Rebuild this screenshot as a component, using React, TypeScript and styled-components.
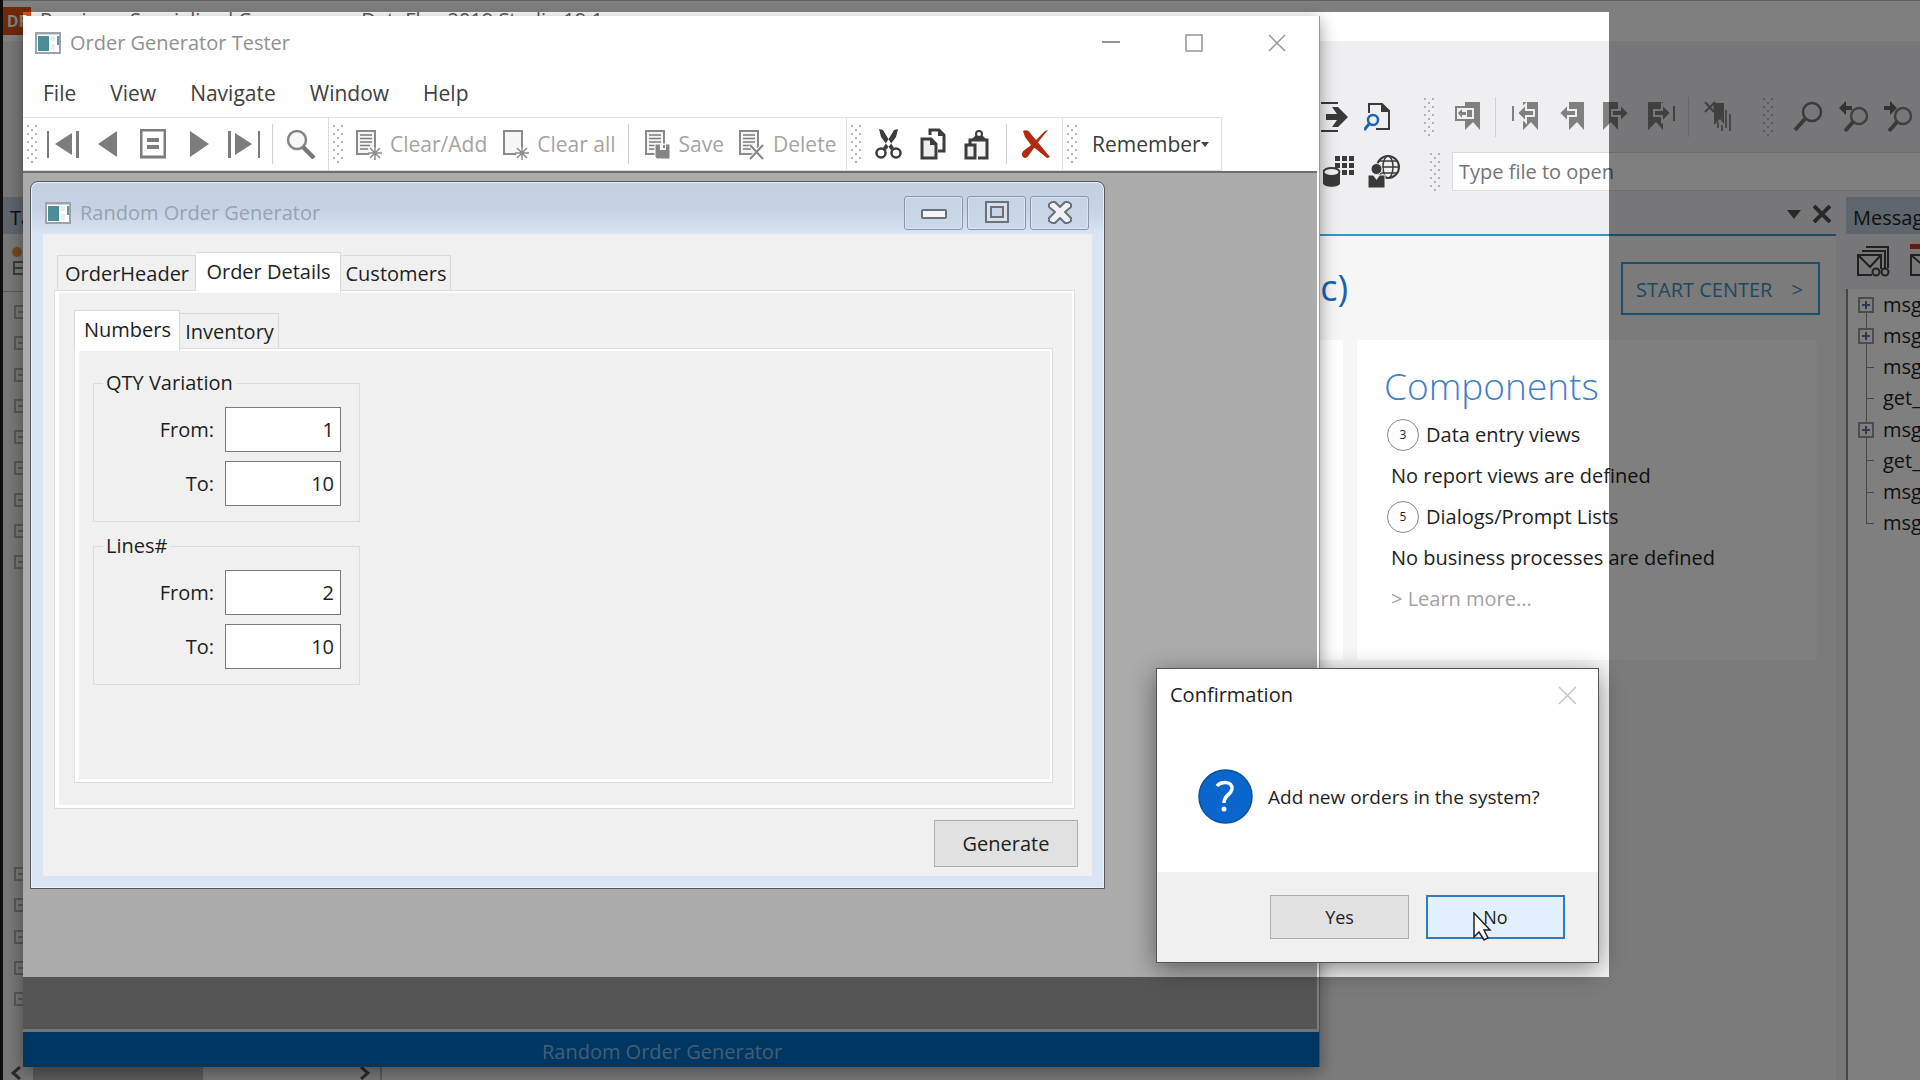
import React from "react";
import styled, { createGlobalStyle, css } from "styled-components";

const Global = createGlobalStyle`
  *, *::before, *::after { box-sizing: border-box; }
  html, body, #root { height: 100%; margin: 0; }
  body { overflow: hidden; }
  button, input { font: inherit; color: inherit; }
`;

const Desktop = styled.div`
  position: relative;
  height: 100vh;
  overflow: hidden;
  background: #efeff2;
  color: #1e1e1e;
  font-family: "Open Sans", "Noto Sans", sans-serif;
  font-size: 20px;
  line-height: 24px;
`;

const iconButton = css`
  display: flex;
  align-items: center;
  justify-content: center;
  padding: 0;
  border: 0;
  background: none;
`;

/* ---------- Studio (background application) ---------- */

const Studio = styled.div`
  display: flex;
  flex-direction: column;
  height: 100%;
  border-left: 3px solid #1c1c1c;
`;

const StudioTitle = styled.header`
  display: flex;
  gap: 9px;
  height: 41px;
  padding-top: 6px;
  background: #ffffff;
  border-top: 1px solid #c4c4c4;
  line-height: 26px;
  color: #5a5a5a;
`;

const StudioLogo = styled.span`
  width: 28px;
  height: 28px;
  background: #e2520f;
  color: #ffffff;
  font-size: 16px;
  font-weight: 700;
  line-height: 28px;
  text-align: center;
`;

const StudioTools = styled.div`
  display: flex;
  flex-direction: column;
  gap: 12px;
  height: 156px;
  padding-top: 54px;
`;

const ToolRow = styled.div`
  display: flex;
  align-items: center;
  justify-content: flex-end;
  height: 43px;
`;

const StudioTool = styled.button<{ $w: number; $gap?: number }>`
  ${iconButton}
  width: ${(p) => p.$w}px;
  margin-right: ${(p) => p.$gap ?? 0}px;
  color: #808080;
`;

const Divider = styled.span<{ $gap?: number; $h?: number }>`
  width: 1px;
  height: ${(p) => p.$h ?? 40}px;
  margin-right: ${(p) => p.$gap ?? 0}px;
  background: #d0d0d0;
`;

const Grip = styled.span<{ $gap?: number }>`
  flex: none;
  width: 10px;
  height: 38px;
  margin-right: ${(p) => p.$gap ?? 0}px;
  background-image: radial-gradient(circle at 1px 1px, #b4b4b4 1px, transparent 1px),
    radial-gradient(circle at 5px 5px, #b4b4b4 1px, transparent 1px);
  background-size: 8px 8px;
`;

const FileBox = styled.input`
  width: 468px;
  height: 39px;
  padding: 0 6px;
  border: 1px solid #dcdcdf;
  border-right: 0;
  background: #ffffff;
  &::placeholder { color: #747474; opacity: 1; }
`;

const Dock = styled.div`
  display: flex;
  flex: 1;
  min-height: 0;
`;

const LeftDock = styled.section`
  display: flex;
  flex-direction: column;
  width: 379px;
  border-right: 2px solid #b8b8b8;
`;

const DockHeader = styled.h2`
  margin: 0;
  height: 37px;
  padding: 0 7px;
  background: #bccadb;
  font-size: 20px;
  font-weight: 400;
  line-height: 42px;
  overflow: hidden;
`;

const DockTools = styled.div`
  height: 58px;
  padding: 10px 8px;
  border-bottom: 1px solid #b8b8b8;
`;

const NodeColumn = styled.div<{ $top: number; $h: number }>`
  display: flex;
  flex-direction: column;
  justify-content: space-between;
  height: ${(p) => p.$h}px;
  margin: ${(p) => p.$top}px 0 0 11px;
`;

const NodeBox = styled.span`
  width: 14px;
  height: 14px;
  border: 2px solid #b0b0b0;
  background: linear-gradient(#b0b0b0, #b0b0b0) center / 6px 2px no-repeat;
`;

const ScrollBar = styled.div`
  display: flex;
  align-items: center;
  justify-content: space-between;
  height: 14px;
  margin-top: auto;
  padding: 0 10px 0 8px;
  background: linear-gradient(#b8b8b8, #b8b8b8) 30px 0 / 170px 14px no-repeat;
  color: #555555;
`;

const Center = styled.main`
  display: flex;
  flex-direction: column;
  flex: 1;
  min-width: 0;
  margin-right: 10px;
`;

const DocTabs = styled.div`
  display: flex;
  align-items: center;
  justify-content: flex-end;
  gap: 12px;
  height: 39px;
  padding: 0 5px 3px 0;
  border-bottom: 2px solid #3a93c4;
`;

const DocButton = styled.button`
  ${iconButton}
  color: #505050;
`;

const DialogClose = styled(DocButton)`
  color: #c4c4c4;
`;

const StartPage = styled.div`
  flex: 1;
  padding: 26px 16px 0 0;
  background: #f6f6f6;
`;

const StartHead = styled.div`
  display: flex;
  justify-content: space-between;
  height: 53px;
  padding-left: 500px;
`;

const ProjectName = styled.h1`
  flex: 1;
  max-width: 466px;
  margin: 0;
  color: #1a62b5;
  font-size: 36px;
  font-weight: 400;
  line-height: 52px;
  text-align: right;
`;

const StartCenter = styled.a`
  display: flex;
  align-items: center;
  justify-content: space-between;
  width: 199px;
  padding: 2px 15px 0 13px;
  border: 2px solid #3f9cd0;
  color: #3f8fc4;
  text-decoration: none;
`;

const Cards = styled.div`
  display: grid;
  grid-template-columns: 1fr 460px;
  gap: 14px;
  height: 320px;
  margin: 25px 3px 0 0;
`;

const Card = styled.section`
  padding: 18px 27px;
  background: #ffffff;
`;

const CardTitle = styled.h2`
  margin: 0;
  color: #3f7fc4;
  font-size: 37px;
  font-weight: 300;
  line-height: 56px;
`;

const CardLine = styled.div<{ $pad?: boolean }>`
  display: flex;
  align-items: center;
  gap: 7px;
  height: 41px;
  padding-left: ${(p) => (p.$pad ? 7 : 3)}px;
  white-space: nowrap;
`;

const Count = styled.span`
  width: 32px;
  height: 32px;
  border: 1px solid #8a8a8a;
  border-radius: 50%;
  font-size: 12px;
  line-height: 30px;
  text-align: center;
`;

const LearnMore = styled.a`
  color: #a2a2a6;
  text-decoration: none;
`;

const Messages = styled.aside`
  display: flex;
  flex-direction: column;
  width: 74px;
  overflow: hidden;
`;

const MessageTools = styled.div`
  display: flex;
  align-items: center;
  gap: 10px;
  height: 55px;
  padding: 0 0 2px 11px;
`;

const MessageTree = styled.ul`
  display: grid;
  flex: 1;
  grid-template-rows: repeat(8, 1fr);
  align-content: start;
  margin: 0;
  padding: 0 0 541px;
  border-left: 2px solid #8c8c8c;
  background: #ffffff;
  list-style: none;
`;

const MessageNode = styled.li<{ $edge?: "first" | "last" }>`
  display: flex;
  align-items: center;
  gap: 9px;
  padding-left: 10px;
  background: linear-gradient(#8c8c8c, #8c8c8c) 18px
    ${(p) => (p.$edge === "first" ? "100%" : "0")} / 1px
    ${(p) => (p.$edge ? "50%" : "100%")} no-repeat;
`;

const Branch = styled.span<{ $open?: boolean }>`
  flex: none;
  width: 16px;
  height: 16px;
  ${(p) =>
    p.$open
      ? css`
          border: 2px solid #9a9a9a;
          background: linear-gradient(#66709c, #66709c) center / 8px 2px no-repeat,
            linear-gradient(#66709c, #66709c) center / 2px 8px no-repeat, #ffffff;
        `
      : css`
          background: linear-gradient(#8c8c8c, #8c8c8c) 100% 50% / 8px 1px no-repeat;
        `}
`;

/* ---------- Order Generator Tester window ---------- */

const TesterWindow = styled.section`
  position: absolute;
  top: 16px;
  right: 600px;
  bottom: 13px;
  left: 23px;
  display: flex;
  flex-direction: column;
  border-right: 1px solid #9a9a9a;
  background: #ffffff;
  box-shadow: 0 4px 16px rgba(0, 0, 0, 0.4);
`;

const TitleBar = styled.header`
  display: flex;
  align-items: center;
  gap: 9px;
  height: 53px;
  padding: 0 33px 0 12px;
  color: #909090;
`;

const Caption = styled.span`
  flex: 1;
`;

const FlatControls = styled.div`
  display: flex;
  gap: 65px;
  color: #959595;
`;

const FlatButton = styled.button`
  ${iconButton}
  width: 18px;
`;

const MenuBar = styled.nav`
  display: flex;
  gap: 34px;
  height: 48px;
  padding: 12px 20px 0;
  font-size: 21px;
`;

const MenuItem = styled.button`
  ${iconButton}
  height: 24px;
  color: #404040;
`;

const ToolBar = styled.div`
  display: flex;
  height: 54px;
  font-size: 21px;
`;

const Band = styled.div<{ $w: number }>`
  display: flex;
  align-items: center;
  width: ${(p) => p.$w}px;
  padding-left: 4px;
  border: 1px solid #dedede;
  border-left: 0;
`;

const Tool = styled.button<{ $gap?: number; $dark?: boolean }>`
  ${iconButton}
  gap: ${(p) => (p.$dark ? 0 : 8)}px;
  margin-right: ${(p) => p.$gap ?? 0}px;
  color: ${(p) => (p.$dark ? "#3c3c3c" : "#a4a4a4")};
  white-space: nowrap;
`;

const Workspace = styled.div`
  flex: 1;
  margin-right: 2px;
  padding: 8px 0 0 7px;
  border-top: 2px solid #6e6e6e;
  background: #ababab;
`;

const StatusBar = styled.footer`
  height: 38px;
  padding: 4px 18px 0 0;
  border-top: 3px solid #e4e8ea;
  background: #006cc4;
  color: #86bbe8;
  line-height: 32px;
  text-align: center;
`;

const ChildWindow = styled.section`
  display: flex;
  flex-direction: column;
  width: 1075px;
  height: 708px;
  padding: 0 12px 12px;
  border: 1px solid #53585f;
  border-radius: 8px 8px 0 0;
  background: linear-gradient(#c3d0e0, #c5d3e4 28px, #d9e4f4 52px);
  box-shadow: inset 0 0 0 1px #eaf1fa;
`;

const ChildTitle = styled.header`
  display: flex;
  align-items: center;
  gap: 9px;
  height: 52px;
  padding: 10px 3px 0 2px;
  color: #98a3b2;
`;

const ChildControls = styled.div`
  display: flex;
  gap: 4px;
  height: 34px;
`;

const ChildButton = styled.button`
  ${iconButton}
  width: 59px;
  border: 1px solid #8797ab;
  border-radius: 3px;
  background: linear-gradient(#c6d3e3, #cbd8e9);
  box-shadow: inset 0 0 0 1px #dbe5f1;
`;

const ChildBody = styled.form`
  display: flex;
  flex: 1;
  flex-direction: column;
  gap: 11px;
  padding: 18px 14px 9px 11px;
  background: #f0f0f0;
`;

const TabArea = styled.div`
  display: flex;
  flex: 1;
  flex-direction: column;
  margin-right: 3px;
`;

const TabStrip = styled.div<{ $indent: number }>`
  display: flex;
  align-items: flex-end;
  height: 38px;
  padding-left: ${(p) => p.$indent}px;
`;

const Tab = styled.button<{ $w: number }>`
  ${iconButton}
  position: relative;
  width: ${(p) => p.$w}px;
  height: 35px;
  padding: 2px 0 0 1px;
  border: 1px solid #d9d9d9;
  border-width: 1px 1px 0 0;
  &:first-child { border-left-width: 1px; }
  &[aria-selected="true"] {
    height: 41px;
    margin-bottom: -3px;
    padding-bottom: 5px;
    background: #ffffff;
  }
`;

const TabPanel = styled.div<{ $pad: string }>`
  display: flex;
  flex: 1;
  flex-direction: column;
  padding: ${(p) => p.$pad};
  border: 1px solid #dcdcdc;
  box-shadow: inset 4px 0 #ffffff, inset -2px 0 #ffffff, inset 0 2px #ffffff, inset 0 -3px #ffffff;
`;

const Group = styled.fieldset`
  display: flex;
  flex-direction: column;
  gap: 9px;
  width: 267px;
  margin: 0 0 12px;
  padding: 12px 18px 15px;
  border: 1px solid #dcdcdc;
`;

const Legend = styled.legend`
  margin-left: -9px;
  padding: 0 3px;
`;

const Field = styled.label`
  display: flex;
  align-items: center;
  justify-content: flex-end;
  gap: 11px;
`;

const NumberBox = styled.input`
  width: 116px;
  height: 45px;
  padding: 0 6px;
  border: 1px solid #7a7a7a;
  background: #ffffff;
  text-align: right;
`;

const PushButton = styled.button<{ $w: number; $h: number; $focus?: boolean }>`
  width: ${(p) => p.$w}px;
  height: ${(p) => p.$h}px;
  padding: 0;
  border: ${(p) => (p.$focus ? "2px solid #2c7cc4" : "1px solid #adadad")};
  background: ${(p) => (p.$focus ? "#e2effc" : "#e1e1e1")};
`;

const GenerateButton = styled(PushButton)`
  align-self: flex-end;
`;

/* ---------- Confirmation dialog ---------- */

const Dialog = styled.section`
  position: absolute;
  top: 668px;
  right: 321px;
  width: 443px;
  border: 1px solid #555555;
  background: #ffffff;
  box-shadow: 0 6px 24px rgba(0, 0, 0, 0.45);
`;

const DialogTitle = styled.header`
  display: flex;
  align-items: center;
  justify-content: space-between;
  height: 52px;
  padding: 0 21px 0 13px;
`;

const DialogMessage = styled.div`
  display: flex;
  align-items: center;
  gap: 15px;
  height: 151px;
  padding-left: 41px;
  font-size: 19px;
`;

const DialogButtons = styled.footer`
  display: flex;
  justify-content: flex-end;
  gap: 17px;
  height: 90px;
  padding: 23px 33px 0;
  background: #f0f0f0;
  font-size: 18px;
`;

const Pointer = styled.svg`
  position: absolute;
  top: 912px;
  right: 427px;
`;

const Spotlight = styled.div`
  position: absolute;
  top: 12px;
  right: 311px;
  bottom: 103px;
  left: 23px;
  box-shadow: 0 0 0 2000px rgba(0, 0, 0, 0.5);
  pointer-events: none;
`;

/* ---------- Icons ---------- */

type SvgProps = { w: number; h: number; children: React.ReactNode };
const Svg = ({ w, h, children }: SvgProps) => (
  <svg width={w} height={h} viewBox={`0 0 ${w} ${h}`} fill="none" aria-hidden="true">
    {children}
  </svg>
);

const AppIcon = () => (
  <Svg w={26} h={22}>
    <rect x="1" y="1" width="24" height="20" fill="#fff" stroke="#9da3a8" strokeWidth="2" />
    <path d="M2 2.500h22" stroke="#cfd6dc" />
    <rect x="3" y="4" width="11" height="15" fill="#4a8f94" />
    <path d="M16 4h4v5h-4zM16 12h4v6h-4z" fill="#e9edf0" />
    <path d="M23 4v9" stroke="#6d93a4" strokeWidth="2" />
  </Svg>
);

const Page = ({ children }: { children?: React.ReactNode }) => (
  <Svg w={27} h={31}>
    <rect x="2" y="2" width="18" height="23" fill="#f6f6f6" stroke="#8a8a8a" strokeWidth="2" />
    {children}
  </Svg>
);
const Lines = () => <path d="M5 6h12M5 9.500h12M5 13h12M5 16.500h10M5 20h8" stroke="#7c7c7c" strokeWidth="1.500" />;
const Star = () => (
  <g>
    <circle cx="20" cy="24" r="6" fill="#fff" />
    <path d="M20 17v14M13 24h14M15 19l10 10M25 19l-10 10" stroke="#8c8c8c" strokeWidth="1.500" />
  </g>
);

const Mark = ({ x = 0 }: { x?: number }) => <path d={`M${x} 1h15v28l-7-8-8 8z`} fill="#808080" />;
const ArrowLeft = () => (
  <path d="M1 12l9-9v6h8v6h-8v6z" fill="#808080" stroke="#efeff2" strokeWidth="2" />
);
const ArrowRight = () => (
  <path d="M26 12l-9-9v6H9v6h8v6z" fill="#808080" stroke="#efeff2" strokeWidth="2" />
);

const Lens = () => (
  <Svg w={30} h={31}>
    <circle cx="19" cy="11" r="9" stroke="#747474" strokeWidth="2.500" />
    <path d="M12 18L2 29" stroke="#747474" strokeWidth="4" />
  </Svg>
);
const LensStep = ({ next }: { next?: boolean }) => (
  <Svg w={30} h={31}>
    <circle cx="20" cy="15" r="8" stroke="#808080" strokeWidth="2.500" />
    <path d="M14 21L6 30" stroke="#747474" strokeWidth="4" />
    <path d={next ? "M14 7L7 0v5H1v4h6v5z" : "M0 7l7-7v5h6v4H7v5z"} fill="#666" />
  </Svg>
);

const CrossIcon = ({ s, w = 1 }: { s: number; w?: number }) => (
  <Svg w={s} h={s}>
    <path d={`M1 1L${s - 1} ${s - 1}M${s - 1} 1L1 ${s - 1}`} stroke="currentColor" strokeWidth={w} />
  </Svg>
);

const Tri = ({ flip }: { flip?: boolean }) => (
  <Svg w={19} h={26}>
    <path d={flip ? "M0 0v26l19-13z" : "M19 0v26L0 13z"} fill="#7c7c7c" />
  </Svg>
);
const EndTri = ({ flip }: { flip?: boolean }) => (
  <Svg w={32} h={27}>
    <g transform={flip ? "translate(32 0) scale(-1 1)" : undefined} fill="#7c7c7c">
      <path d="M0 0h2v27H0zM29 0h3v27h-3zM25 2v22L8 13z" />
    </g>
  </Svg>
);

const Envelope = () => (
  <Svg w={33} h={33}>
    <path d="M1 11h23v20H1zM1 11l12 12 11-12M5 7h23v17M9 3h22v21" stroke="#404040" strokeWidth="2" />
    <path d="M15 25h17v7H15z" fill="#efeff2" />
    <circle cx="19" cy="28" r="3.500" stroke="#404040" strokeWidth="2" />
    <circle cx="28" cy="28" r="3.500" stroke="#404040" strokeWidth="2" />
  </Svg>
);

/* ---------- Screens ---------- */

const messages: { text: string; open?: boolean }[] = [
  { text: "msg_", open: true },
  { text: "msg_", open: true },
  { text: "msg_" },
  { text: "get_" },
  { text: "msg_", open: true },
  { text: "get_" },
  { text: "msg_" },
  { text: "msg_" },
];

const nodes = (n: number) => Array.from({ length: n }, (_, i) => <NodeBox key={i} />);

const StudioApp = () => (
  <Studio>
    <StudioTitle>
      <StudioLogo>DF</StudioLogo>
      <span>Preview - Specialized Consumers - DataFlex 2019 Studio 19.1</span>
    </StudioTitle>
    <StudioTools>
      <ToolRow>
        <StudioTool $w={28} $gap={15} aria-label="Run">
          <Svg w={28} h={32}>
            <path d="M0 2h17M0 30h17" stroke="#3a3a3a" strokeWidth="2" />
            <path d="M5 13h11l-5-7h6l10 10-10 10h-6l5-7H5z" fill="#3a3a3a" />
          </Svg>
        </StudioTool>
        <StudioTool $w={27} $gap={33} aria-label="Find in files">
          <Svg w={27} h={29}>
            <path d="M5 11V2h13l7 7v18H12" stroke="#3a3a3a" strokeWidth="2" />
            <path d="M17 1l9 9h-9z" fill="#3a3a3a" />
            <circle cx="9" cy="18" r="5" stroke="#1f62ae" strokeWidth="2.500" />
            <path d="M5 22l-5 6" stroke="#1f62ae" strokeWidth="3" />
          </Svg>
        </StudioTool>
        <Grip $gap={21} />
        <StudioTool $w={27} $gap={13} aria-label="Toggle bookmark">
          <Svg w={27} h={31}>
            <Mark x={10} />
            <path d="M1 6h19v13H1z" fill="#efeff2" stroke="#808080" strokeWidth="2" />
            <path d="M3 12l4-4v3h4v3H7v3zM12 9h5v7h-5z" fill="#808080" />
          </Svg>
        </StudioTool>
        <Divider $gap={16} />
        <StudioTool $w={27} $gap={19} aria-label="First bookmark">
          <Svg w={27} h={31}>
            <Mark x={11} />
            <path d="M1 5v15" stroke="#808080" strokeWidth="2" />
            <g transform="translate(4 0)"><ArrowLeft /></g>
          </Svg>
        </StudioTool>
        <StudioTool $w={26} $gap={19} aria-label="Previous bookmark">
          <Svg w={26} h={31}><Mark x={11} /><ArrowLeft /></Svg>
        </StudioTool>
        <StudioTool $w={26} $gap={19} aria-label="Next bookmark">
          <Svg w={26} h={31}><Mark /><ArrowRight /></Svg>
        </StudioTool>
        <StudioTool $w={27} $gap={13} aria-label="Last bookmark">
          <Svg w={27} h={31}>
            <Mark />
            <g transform="translate(-3 0)"><ArrowRight /></g>
            <path d="M26 5v15" stroke="#808080" strokeWidth="2" />
          </Svg>
        </StudioTool>
        <Divider $gap={15} />
        <StudioTool $w={29} $gap={30} aria-label="Clear bookmarks">
          <Svg w={29} h={31}>
            <path d="M9 2h11v21l-4-5-6 6V11z" fill="#808080" />
            <path d="M22 9v18M26 13v17M18 24v6M14 21v6" stroke="#909090" strokeWidth="2" />
            <path d="M1 1l9 10M11 1L1 11" stroke="#808080" strokeWidth="2" />
          </Svg>
        </StudioTool>
        <Grip $gap={20} />
        <StudioTool $w={30} $gap={16} aria-label="Find"><Lens /></StudioTool>
        <StudioTool $w={30} $gap={14} aria-label="Find previous"><LensStep /></StudioTool>
        <StudioTool $w={30} $gap={7} aria-label="Find next"><LensStep next /></StudioTool>
      </ToolRow>
      <ToolRow>
        <StudioTool $w={32} $gap={13} aria-label="Database">
          <Svg w={32} h={33}>
            <path d="M12 1h5v5h-5zM19 1h5v5h-5zM26 1h5v5h-5zM12 8h5v5h-5zM19 8h5v5h-5zM26 8h5v5h-5zM19 15h5v5h-5zM26 15h5v5h-5z" fill="#3a3a3a" />
            <path d="M0 17v11c0 5 17 5 17 0V17z" fill="#3a3a3a" />
            <ellipse cx="8.500" cy="17" rx="8" ry="4" fill="#f4f4f6" stroke="#3a3a3a" strokeWidth="2" />
          </Svg>
        </StudioTool>
        <StudioTool $w={32} $gap={30} aria-label="Web">
          <Svg w={32} h={33}>
            <circle cx="20" cy="12" r="11" stroke="#3a3a3a" strokeWidth="2" />
            <ellipse cx="20" cy="12" rx="5" ry="11" stroke="#3a3a3a" strokeWidth="1.500" />
            <path d="M9 12h22M11 6h18M11 18h18" stroke="#3a3a3a" strokeWidth="1.500" />
            <path d="M0 20h17v13H0z" fill="#3a3a3a" stroke="#efeff2" />
            <circle cx="8.500" cy="14" r="5.500" fill="#3a3a3a" stroke="#efeff2" />
            <path d="M5 20l3.500 5 3.500-5z" fill="#efeff2" />
          </Svg>
        </StudioTool>
        <Grip $gap={12} />
        <FileBox placeholder="Type file to open" aria-label="Type file to open" />
      </ToolRow>
    </StudioTools>
    <Dock>
      <LeftDock>
        <DockHeader>Tables</DockHeader>
        <DockTools>
          <Svg w={16} h={32}>
            <circle cx="6" cy="8" r="5" fill="#e0973a" />
            <path d="M3 18h10v12H3zM3 24h10" stroke="#777" strokeWidth="2" />
          </Svg>
        </DockTools>
        <NodeColumn $top={13} $h={264}>{nodes(9)}</NodeColumn>
        <NodeColumn $top={298} $h={139}>{nodes(5)}</NodeColumn>
        <ScrollBar>
          <Svg w={10} h={14}><path d="M9 1L2 7l7 6" stroke="currentColor" strokeWidth="3" /></Svg>
          <Svg w={10} h={14}><path d="M1 1l7 6-7 6" stroke="currentColor" strokeWidth="3" /></Svg>
        </ScrollBar>
      </LeftDock>
      <Center>
        <DocTabs>
          <DocButton aria-label="Open documents">
            <Svg w={14} h={9}><path d="M0 0h14L7 9z" fill="currentColor" /></Svg>
          </DocButton>
          <DocButton aria-label="Close document"><CrossIcon s={18} w={4} /></DocButton>
        </DocTabs>
        <StartPage>
          <StartHead>
            <ProjectName>(c)</ProjectName>
            <StartCenter href="#start"><span>START CENTER</span><span>&gt;</span></StartCenter>
          </StartHead>
          <Cards>
            <Card />
            <Card>
              <CardTitle>Components</CardTitle>
              <CardLine><Count>3</Count>Data entry views</CardLine>
              <CardLine $pad>No report views are defined</CardLine>
              <CardLine><Count>5</Count>Dialogs/Prompt Lists</CardLine>
              <CardLine $pad>No business processes are defined</CardLine>
              <CardLine $pad><LearnMore href="#learn">&gt; Learn more...</LearnMore></CardLine>
            </Card>
          </Cards>
        </StartPage>
      </Center>
      <Messages>
        <DockHeader>Messages</DockHeader>
        <MessageTools>
          <DocButton aria-label="Find message"><Envelope /></DocButton>
          <Divider />
          <DocButton aria-label="New message">
            <Svg w={33} h={33}>
              <path d="M0 0h33v5H0z" fill="#c03818" />
              <path d="M1 11h28v20H1zM1 11l14 12 14-12" stroke="#404040" strokeWidth="2" />
            </Svg>
          </DocButton>
        </MessageTools>
        <MessageTree>
          {messages.map((m, i) => (
            <MessageNode key={i} $edge={i === 0 ? "first" : i === messages.length - 1 ? "last" : undefined}>
              <Branch $open={m.open} />
              {m.text}
            </MessageNode>
          ))}
        </MessageTree>
      </Messages>
    </Dock>
  </Studio>
);

const NumberField = ({ label, value }: { label: string; value: string }) => (
  <Field>
    {label}
    <NumberBox defaultValue={value} />
  </Field>
);

const OrderForm = () => (
  <ChildWindow>
    <ChildTitle>
      <AppIcon />
      <Caption>Random Order Generator</Caption>
      <ChildControls>
        <ChildButton aria-label="Minimize">
          <Svg w={26} h={20}><rect x="1" y="7" width="24" height="8" rx="1" fill="#f6f6f8" stroke="#6a717e" strokeWidth="2" /></Svg>
        </ChildButton>
        <ChildButton aria-label="Maximize">
          <Svg w={26} h={24}>
            <rect x="2" y="1" width="22" height="20" fill="#dcdfe6" stroke="#6a717e" strokeWidth="2" />
            <rect x="7" y="6" width="12" height="10" fill="#c8d5e5" stroke="#6a717e" strokeWidth="2" />
          </Svg>
        </ChildButton>
        <ChildButton aria-label="Close">
          <Svg w={26} h={24}>
            <path d="M2 3l3-2h3l5 5 5-5h3l3 2v3l-6 5 6 6v3l-3 2h-3l-5-5-5 5H5l-3-2v-3l6-6-6-5z" fill="#f1f1f4" stroke="#6a717e" strokeWidth="2" strokeLinejoin="round" />
          </Svg>
        </ChildButton>
      </ChildControls>
    </ChildTitle>
    <ChildBody onSubmit={(e) => e.preventDefault()}>
      <TabArea>
        <TabStrip $indent={3} role="tablist">
          <Tab type="button" role="tab" aria-selected={false} $w={139}>OrderHeader</Tab>
          <Tab type="button" role="tab" aria-selected $w={145}>Order Details</Tab>
          <Tab type="button" role="tab" aria-selected={false} $w={110}>Customers</Tab>
        </TabStrip>
        <TabPanel role="tabpanel" $pad="19px 21px 25px 19px">
          <TabStrip $indent={0} role="tablist">
            <Tab type="button" role="tab" aria-selected $w={106}>Numbers</Tab>
            <Tab type="button" role="tab" aria-selected={false} $w={99}>Inventory</Tab>
          </TabStrip>
          <TabPanel role="tabpanel" $pad="22px 18px">
            <Group>
              <Legend>QTY Variation</Legend>
              <NumberField label="From:" value="1" />
              <NumberField label="To:" value="10" />
            </Group>
            <Group>
              <Legend>Lines#</Legend>
              <NumberField label="From:" value="2" />
              <NumberField label="To:" value="10" />
            </Group>
          </TabPanel>
        </TabPanel>
      </TabArea>
      <GenerateButton type="submit" $w={144} $h={47}>Generate</GenerateButton>
    </ChildBody>
  </ChildWindow>
);

const Tester = () => (
  <TesterWindow>
    <TitleBar>
      <AppIcon />
      <Caption>Order Generator Tester</Caption>
      <FlatControls>
        <FlatButton aria-label="Minimize"><Svg w={18} h={18}><path d="M0 8h18" stroke="currentColor" strokeWidth="2" /></Svg></FlatButton>
        <FlatButton aria-label="Maximize"><Svg w={18} h={18}><rect x="1" y="1" width="16" height="16" stroke="currentColor" strokeWidth="1.500" /></Svg></FlatButton>
        <FlatButton aria-label="Close"><CrossIcon s={18} w={1.5} /></FlatButton>
      </FlatControls>
    </TitleBar>
    <MenuBar>
      {["File", "View", "Navigate", "Window", "Help"].map((m) => <MenuItem key={m}>{m}</MenuItem>)}
    </MenuBar>
    <ToolBar>
      <Band $w={306}>
        <Grip $gap={10} />
        <Tool $gap={19} aria-label="First record"><EndTri /></Tool>
        <Tool $gap={23} aria-label="Previous record"><Tri /></Tool>
        <Tool $gap={24} aria-label="Record list">
          <Svg w={26} h={30}>
            <rect x="1" y="1" width="24" height="27" stroke="#7c7c7c" strokeWidth="3" />
            <path d="M7 11h12M7 18h12" stroke="#7c7c7c" strokeWidth="4" />
          </Svg>
        </Tool>
        <Tool $gap={19} aria-label="Next record"><Tri flip /></Tool>
        <Tool $gap={12} aria-label="Last record"><EndTri flip /></Tool>
        <Divider $gap={13} />
        <Tool aria-label="Find record">
          <Svg w={30} h={30}>
            <circle cx="11" cy="11" r="9" fill="#f7f7f7" stroke="#858585" strokeWidth="2.500" />
            <path d="M17 18l11 11" stroke="#777" strokeWidth="4.500" />
          </Svg>
        </Tool>
      </Band>
      <Band $w={518}>
        <Grip $gap={12} />
        <Tool $gap={15}><Page><Lines /><Star /></Page>Clear/Add</Tool>
        <Tool $gap={12}><Page><Star /></Page>Clear all</Tool>
        <Divider $gap={15} />
        <Tool $gap={14}>
          <Page>
            <Lines />
            <path d="M11 15h15v15H13l-2-2z" fill="#858585" stroke="#fff" />
            <path d="M16 15h6v6h-6z" fill="#fff" />
            <path d="M19 16h2v3h-2z" fill="#858585" />
          </Page>
          Save
        </Tool>
        <Tool>
          <Page><Lines /><path d="M12 16l13 14M25 16L12 30" stroke="#fff" strokeWidth="4" /><path d="M12 16l13 14M25 16L12 30" stroke="#858585" strokeWidth="2" /></Page>
          Delete
        </Tool>
      </Band>
      <Band $w={216}>
        <Grip $gap={14} />
        <Tool $gap={18} aria-label="Cut">
          <Svg w={27} h={32}>
            <path d="M4 1l4 1 6 10 5 8-3 2-4-5-6-8zM23 1l-4 1-6 10-5 8 3 2 4-5 6-8z" fill="#3c3c3c" />
            <circle cx="6" cy="25" r="4.500" stroke="#3c3c3c" strokeWidth="2.500" fill="#fff" />
            <circle cx="21" cy="25" r="4.500" stroke="#3c3c3c" strokeWidth="2.500" fill="#fff" />
          </Svg>
        </Tool>
        <Tool $gap={18} aria-label="Copy">
          <Svg w={26} h={32}>
            <path d="M10 7V2h9l5 5v16h-6" stroke="#3c3c3c" strokeWidth="3" />
            <path d="M2 11h9l5 5v14H2z" fill="#eee" stroke="#3c3c3c" strokeWidth="3" />
            <path d="M10 10v7h7zM18 1v7h7z" fill="#3c3c3c" />
          </Svg>
        </Tool>
        <Tool $gap={16} aria-label="Paste">
          <Svg w={26} h={32}>
            <path d="M6 16v-4h17v18h-9" fill="#f4f4f4" stroke="#3c3c3c" strokeWidth="3" />
            <path d="M6 13l5-5h8l5 5z" fill="#3c3c3c" />
            <circle cx="15" cy="6" r="3" fill="#fff" stroke="#3c3c3c" strokeWidth="2" />
            <path d="M2 17h9v13H2z" fill="#eee" stroke="#3c3c3c" strokeWidth="3" />
          </Svg>
        </Tool>
        <Divider $gap={14} />
        <Tool aria-label="Cancel">
          <Svg w={30} h={30}>
            <path d="M2 2c4-2 6 0 8 3l19 23-3 1L10 16 4 8z" fill="#b02c10" />
            <path d="M27 1l-9 11L8 26c-2 4-6 4-7 0s6-7 9-10L24 2z" fill="#b02c10" />
          </Svg>
        </Tool>
      </Band>
      <Band $w={159}>
        <Grip $gap={15} />
        <Tool $dark>Remember<Svg w={8} h={5}><path d="M0 0h8L4 5z" fill="#444" /></Svg></Tool>
      </Band>
    </ToolBar>
    <Workspace>
      <OrderForm />
    </Workspace>
    <StatusBar>Random Order Generator</StatusBar>
  </TesterWindow>
);

const Confirmation = () => (
  <Dialog role="dialog" aria-label="Confirmation">
    <DialogTitle>
      Confirmation
      <DialogClose aria-label="Close"><CrossIcon s={19} w={1.5} /></DialogClose>
    </DialogTitle>
    <DialogMessage>
      <Svg w={55} h={55}>
        <circle cx="27.500" cy="27.500" r="26.500" fill="#0a66cc" stroke="#0b4f9e" strokeWidth="1.500" />
        <path d="M19 17c4-5 16-5 15 3-1 6-8 6-8 14" stroke="#fff" strokeWidth="3.500" />
        <circle cx="26" cy="40" r="2.500" fill="#fff" />
      </Svg>
      Add new orders in the system?
    </DialogMessage>
    <DialogButtons>
      <PushButton $w={139} $h={44}>Yes</PushButton>
      <PushButton $w={139} $h={44} $focus>No</PushButton>
    </DialogButtons>
  </Dialog>
);

export default function App() {
  return (
    <>
      <Global />
      <Desktop>
        <StudioApp />
        <Tester />
        <Confirmation />
        <Pointer width="20" height="30" viewBox="0 0 20 30" aria-hidden="true">
          <path d="M1 1v24l5-5 5 8 4-2-4-8h6z" fill="#fff" stroke="#222" strokeWidth="1.500" />
        </Pointer>
        <Spotlight />
      </Desktop>
    </>
  );
}
